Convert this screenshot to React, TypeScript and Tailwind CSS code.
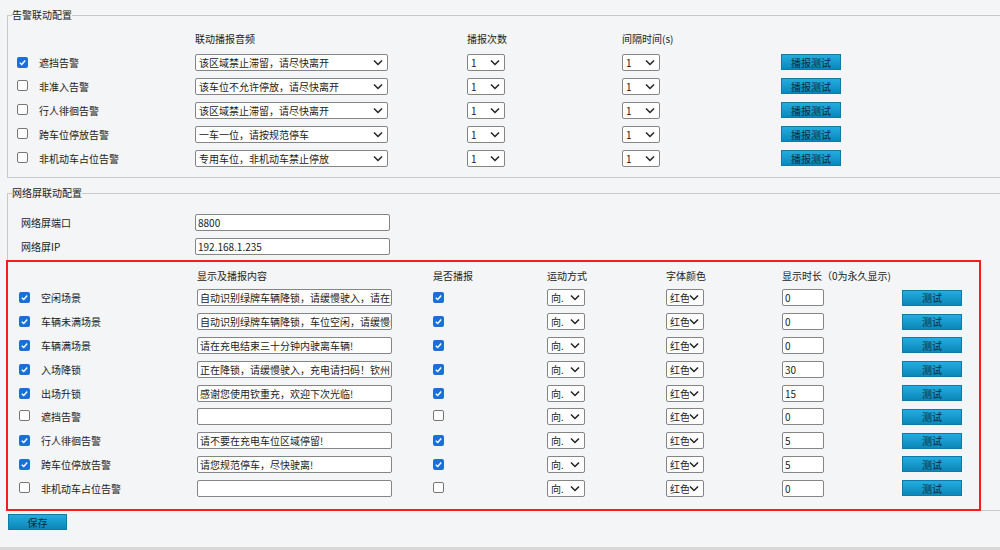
import React from "react";

const Chk = ({ on }: { on: boolean }) =>
  on ? (
    <span className="inline-flex h-[11px] w-[11px] items-center justify-center rounded-[2px] bg-[#1a6fd8]">
      <svg width="9" height="9" viewBox="0 0 10 10"><path d="M2 5.2 L4.2 7.3 L8 2.8" stroke="white" strokeWidth="1.6" fill="none" /></svg>
    </span>
  ) : (
    <span className="inline-block h-[11px] w-[11px] rounded-[2px] border border-[#767676] bg-white" />
  );

const Sel = ({ text, w }: { text: string; w: string }) => (
  <div className={`flex h-[17px] items-center justify-between overflow-hidden rounded-[2px] border border-[#858585] bg-white pl-[3px] pr-[4px] ${w}`}>
    <span className="overflow-hidden whitespace-nowrap">{text}</span>
    <svg width="10" height="7" viewBox="0 0 10 7" className="shrink-0"><path d="M1 1.5 L5 5.5 L9 1.5" stroke="#222" strokeWidth="1.5" fill="none" /></svg>
  </div>
);

const Inp = ({ text, w }: { text: string; w: string }) => (
  <div className={`flex h-[17px] items-center overflow-hidden whitespace-nowrap rounded-[2px] border border-[#858585] bg-white pl-[2px] ${w}`}>{text}</div>
);

const Btn = ({ t }: { t: string }) => (
  <div className="flex h-[16px] w-[60px] items-center justify-center border border-[#0d7aa8] bg-gradient-to-b from-[#22ade0] to-[#0b87b8] text-[#0d2a3a]">{t}</div>
);

const alarms = [
  ["遮挡告警", "该区域禁止滞留，请尽快离开", true],
  ["非准入告警", "该车位不允许停放，请尽快离开", false],
  ["行人徘徊告警", "该区域禁止滞留，请尽快离开", false],
  ["跨车位停放告警", "一车一位，请按规范停车", false],
  ["非机动车占位告警", "专用车位，非机动车禁止停放", false],
] as const;

const scenes: [string, string, boolean, string][] = [
  ["空闲场景", "自动识别绿牌车辆降锁，请缓慢驶入，请在充", true, "0"],
  ["车辆未满场景", "自动识别绿牌车辆降锁，车位空闲，请缓慢驶入", true, "0"],
  ["车辆满场景", "请在充电结束三十分钟内驶离车辆!", true, "0"],
  ["入场降锁", "正在降锁，请缓慢驶入，充电请扫码！钦州", true, "30"],
  ["出场升锁", "感谢您使用钦重充，欢迎下次光临!", true, "15"],
  ["遮挡告警", "", false, "0"],
  ["行人徘徊告警", "请不要在充电车位区域停留!", true, "5"],
  ["跨车位停放告警", "请您规范停车，尽快驶离!", true, "5"],
  ["非机动车占位告警", "", false, "0"],
];

export default function App() {
  return (
    <div
      className="relative h-[550px] w-[1000px] overflow-hidden bg-[#f4f5f6] text-[10px] text-[#222]"
      style={{ fontFamily: '"Noto Sans CJK SC", "Noto Sans", sans-serif' }}
    >
      <fieldset className="ml-[7px] mt-[8px] h-[170px] border border-r-0 border-[#c8c8c8] pl-[9px]">
        <legend className="-ml-[5px] px-0 leading-[14px]">告警联动配置</legend>
        <div className="flex h-[28px] items-center pt-[4px]">
          <span className="w-[178px]" />
          <span className="w-[272px]">联动播报音频</span>
          <span className="w-[155px]">播报次数</span>
          <span>间隔时间(s)</span>
        </div>
        {alarms.map(([l, s, c], i) => (
          <div key={i} className="flex h-[24px] items-center">
            <span className="w-[22px]"><Chk on={c} /></span>
            <span className="w-[156px]">{l}</span>
            <span className="w-[272px]"><Sel text={s} w="w-[193px]" /></span>
            <span className="w-[155px]"><Sel text="1" w="w-[38px]" /></span>
            <span className="w-[159px]"><Sel text="1" w="w-[38px]" /></span>
            <Btn t="播报测试" />
          </div>
        ))}
      </fieldset>

      <fieldset className="ml-[7px] mt-[8px] h-[325px] border border-r-0 border-[#c8c8c8] pl-[9px]">
        <legend className="-ml-[5px] leading-[14px]">网络屏联动配置</legend>
        <div className="flex h-[24px] items-center pt-[10px] box-content">
          <span className="w-[178px] pl-[4px]">网络屏端口</span>
          <Inp text="8800" w="w-[195px]" />
        </div>
        <div className="flex h-[24px] items-center">
          <span className="w-[178px] pl-[4px]">网络屏IP</span>
          <Inp text="192.168.1.235" w="w-[195px]" />
        </div>
        <div className="-ml-[11px] mt-[2px] h-[251px] w-[975px] border-2 border-[#ff1a1a] pl-[11px]">
          <div className="flex h-[24px] items-center pt-[2px]">
            <span className="w-[178px]" />
            <span className="w-[236px]">显示及播报内容</span>
            <span className="w-[114px]">是否播报</span>
            <span className="w-[119px]">运动方式</span>
            <span className="w-[116px]">字体颜色</span>
            <span>显示时长（0为永久显示)</span>
          </div>
          {scenes.map(([l, t, c, d], i) => (
            <div key={i} className="flex h-[23.8px] items-center">
              <span className="w-[22px]"><Chk on={c} /></span>
              <span className="w-[156px]">{l}</span>
              <span className="w-[236px]"><Inp text={t} w="w-[195px]" /></span>
              <span className="w-[114px]"><Chk on={c} /></span>
              <span className="w-[119px]"><Sel text="向." w="w-[38px]" /></span>
              <span className="w-[116px]"><Sel text="红色" w="w-[38px]" /></span>
              <span className="w-[120px]"><Inp text={d} w="w-[42px]" /></span>
              <Btn t="测试" />
            </div>
          ))}
        </div>
      </fieldset>

      <div className="ml-[8px] mt-[3px] flex h-[16px] w-[59px] items-center justify-center border border-[#0d7aa8] bg-gradient-to-b from-[#22ade0] to-[#0b87b8] text-[#0d2a3a]">保存</div>
      <div className="absolute bottom-0 left-0 h-[3px] w-full bg-[#d8d8d8]" />
    </div>
  );
}
